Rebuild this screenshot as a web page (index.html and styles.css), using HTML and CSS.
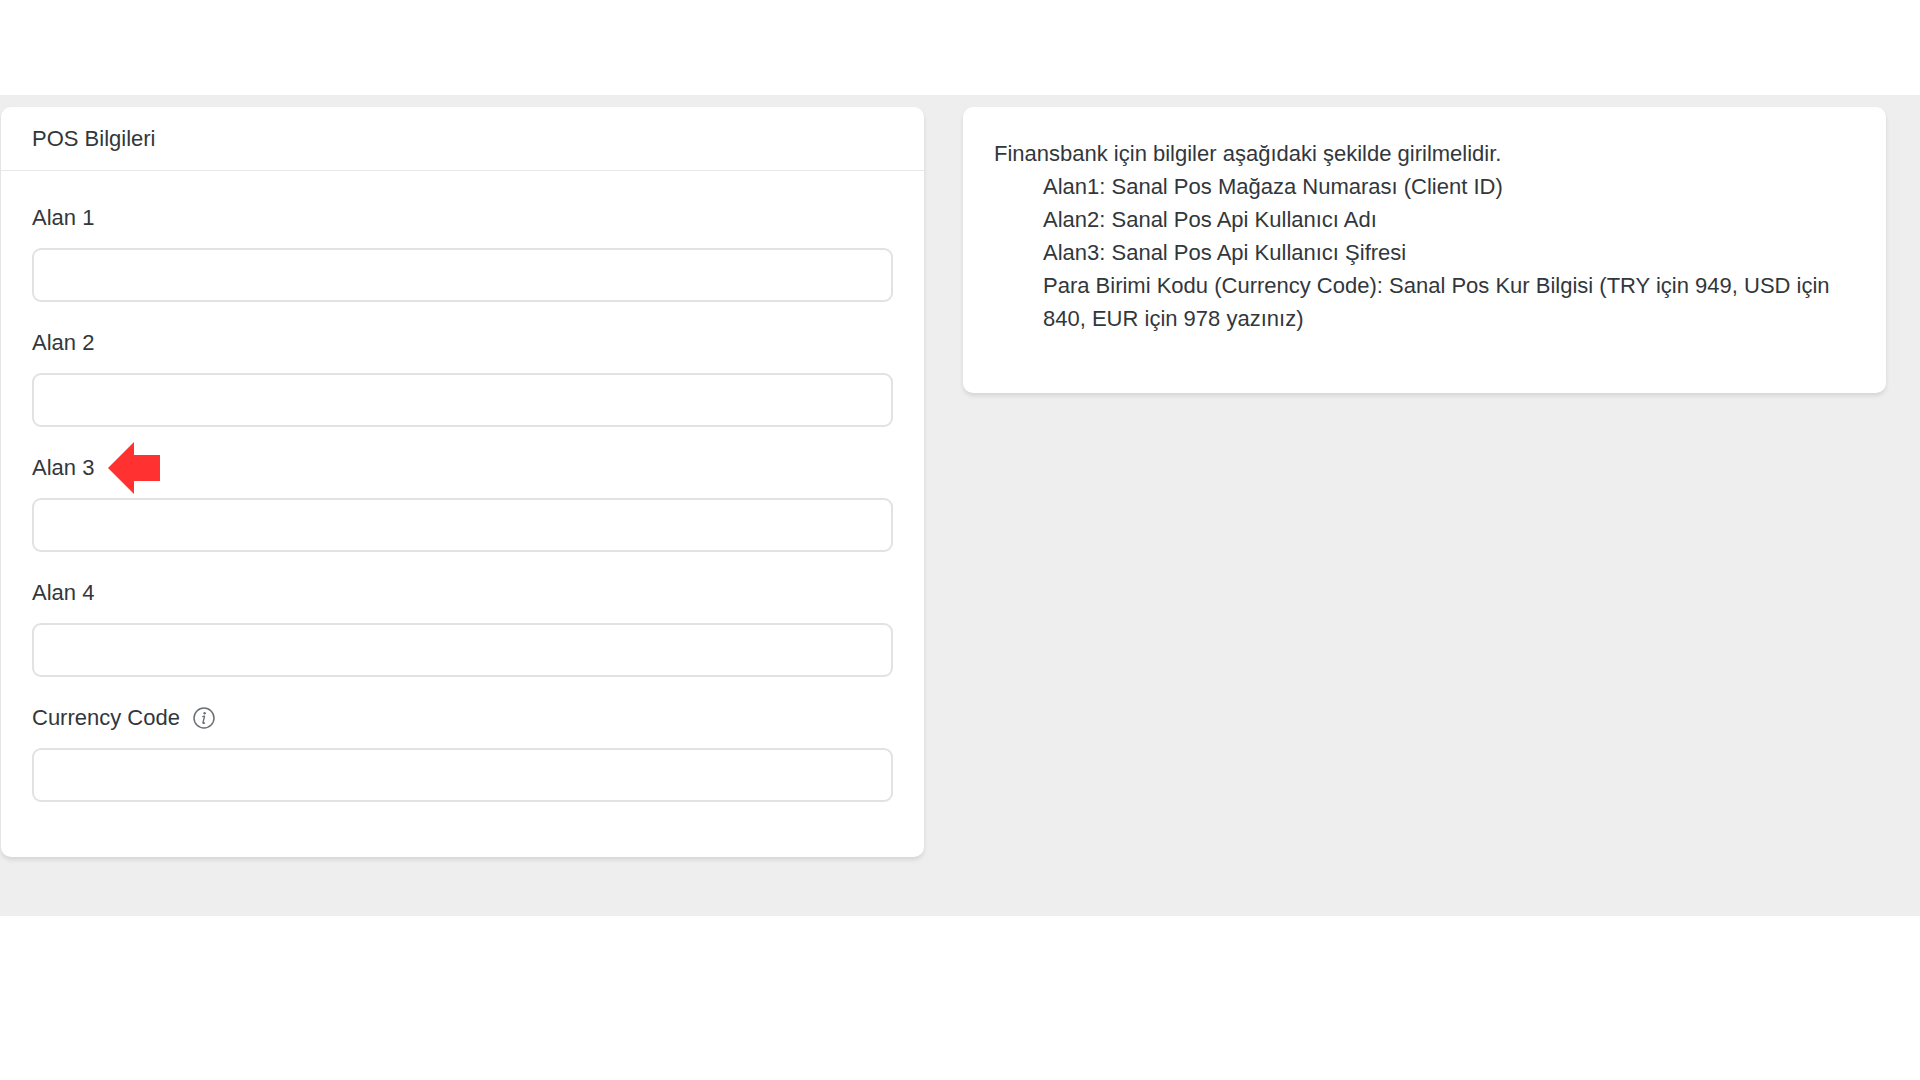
FILE: index.html
```html
<!DOCTYPE html>
<html lang="tr">
<head>
  <meta charset="UTF-8" />
  <meta name="viewport" content="width=device-width, initial-scale=1.0" />
  <title>POS Bilgileri</title>
  <link rel="stylesheet" href="styles.css">
</head>
<body>
  <main class="page">

    <!-- POS form -->
    <form class="card">
      <h1 class="card-header">POS Bilgileri</h1>
      <div class="card-body">
        <div class="form-group">
          <div class="label-row">
            <label for="alan1">Alan 1</label>
          </div>
          <input type="text" id="alan1" class="form-control">
        </div>
        <div class="form-group">
          <div class="label-row">
            <label for="alan2">Alan 2</label>
          </div>
          <input type="text" id="alan2" class="form-control">
        </div>
        <div class="form-group">
          <div class="label-row">
            <label for="alan3">Alan 3</label>
            <svg class="arrow" viewBox="0 0 52 52" aria-hidden="true">
              <path d="M0 26 26 0V13H52V39H26V52Z" fill="#ff3131"/>
            </svg>
          </div>
          <input type="text" id="alan3" class="form-control">
        </div>
        <div class="form-group">
          <div class="label-row">
            <label for="alan4">Alan 4</label>
          </div>
          <input type="text" id="alan4" class="form-control">
        </div>
        <div class="form-group">
          <div class="label-row">
            <label for="currency">Currency Code</label>
            <svg class="info-icon" viewBox="0 0 22 22" fill="none" stroke="currentColor" aria-hidden="true">
              <circle cx="11" cy="11" r="10" stroke-width="1.5"/>
              <circle cx="11.600" cy="6.200" r="1.200" fill="currentColor" stroke="none"/>
              <path d="M9.300 9.600l2.200-.5-1.500 6.500q-.2 1 .8.700l1.100-.7" stroke-width="1.400" stroke-linejoin="round"/>
            </svg>
          </div>
          <input type="text" id="currency" class="form-control">
        </div>
      </div>
    </form>

    <!-- Bank notes -->
    <section class="card info">
      <p>Finansbank için bilgiler aşağıdaki şekilde girilmelidir.</p>
      <ul class="info-list">
        <li>Alan1: Sanal Pos Mağaza Numarası (Client ID)</li>
        <li>Alan2: Sanal Pos Api Kullanıcı Adı</li>
        <li>Alan3: Sanal Pos Api Kullanıcı Şifresi</li>
        <li>Para Birimi Kodu (Currency Code): Sanal Pos Kur Bilgisi (TRY için 949, USD için 840, EUR için 978 yazınız)</li>
      </ul>
    </section>

  </main>
</body>
</html>
```
FILE: styles.css
```css
* {
  box-sizing: border-box;
  margin: 0;
  padding: 0;
}

body {
  padding-top: 95px;
  background-color: #ffffff;
  color: #32373c;
  font-family: "Liberation Sans", Arial, Helvetica, sans-serif;
  font-size: 22px;
  line-height: 33px;
}

.page {
  display: grid;
  grid-template-columns: 1fr 1fr;
  gap: 39px;
  align-items: start;
  padding: 12px 34px 59px 1px;
  background-color: #eeeeee;
}

.card {
  background-color: #ffffff;
  border-radius: 10px;
  box-shadow: 0 3px 4px rgba(0, 0, 0, 0.1);
}

.card-header {
  padding: 15px 31px;
  border-bottom: 1px solid #e8e8e8;
  font-size: 22px;
  font-weight: 400;
}

.card-body {
  padding: 30px 31px;
}

.form-group {
  margin-bottom: 24px;
}

.form-group:last-child {
  margin-bottom: 25px;
}

.label-row {
  display: flex;
  align-items: center;
  height: 33px;
  margin-bottom: 14px;
}

.form-control {
  display: block;
  width: 100%;
  height: 54px;
  padding: 0 16px;
  border: 2px solid #e2e2e2;
  border-radius: 9px;
  background-color: #ffffff;
  color: inherit;
  font: inherit;
}

.form-control:focus {
  outline: none;
  border-color: #a8b4c0;
}

.arrow {
  flex: none;
  width: 52px;
  height: 52px;
  margin-left: 14px;
}

.info-icon {
  flex: none;
  width: 22px;
  height: 22px;
  margin-left: 13px;
  color: #6c7074;
}

.info {
  padding: 30px 31px;
}

.info-list {
  padding-left: 49px;
  margin-bottom: 28px;
  list-style: none;
}

@media screen and (max-width: 900px) {
  .page {
    grid-template-columns: 1fr;
  }
}
```
